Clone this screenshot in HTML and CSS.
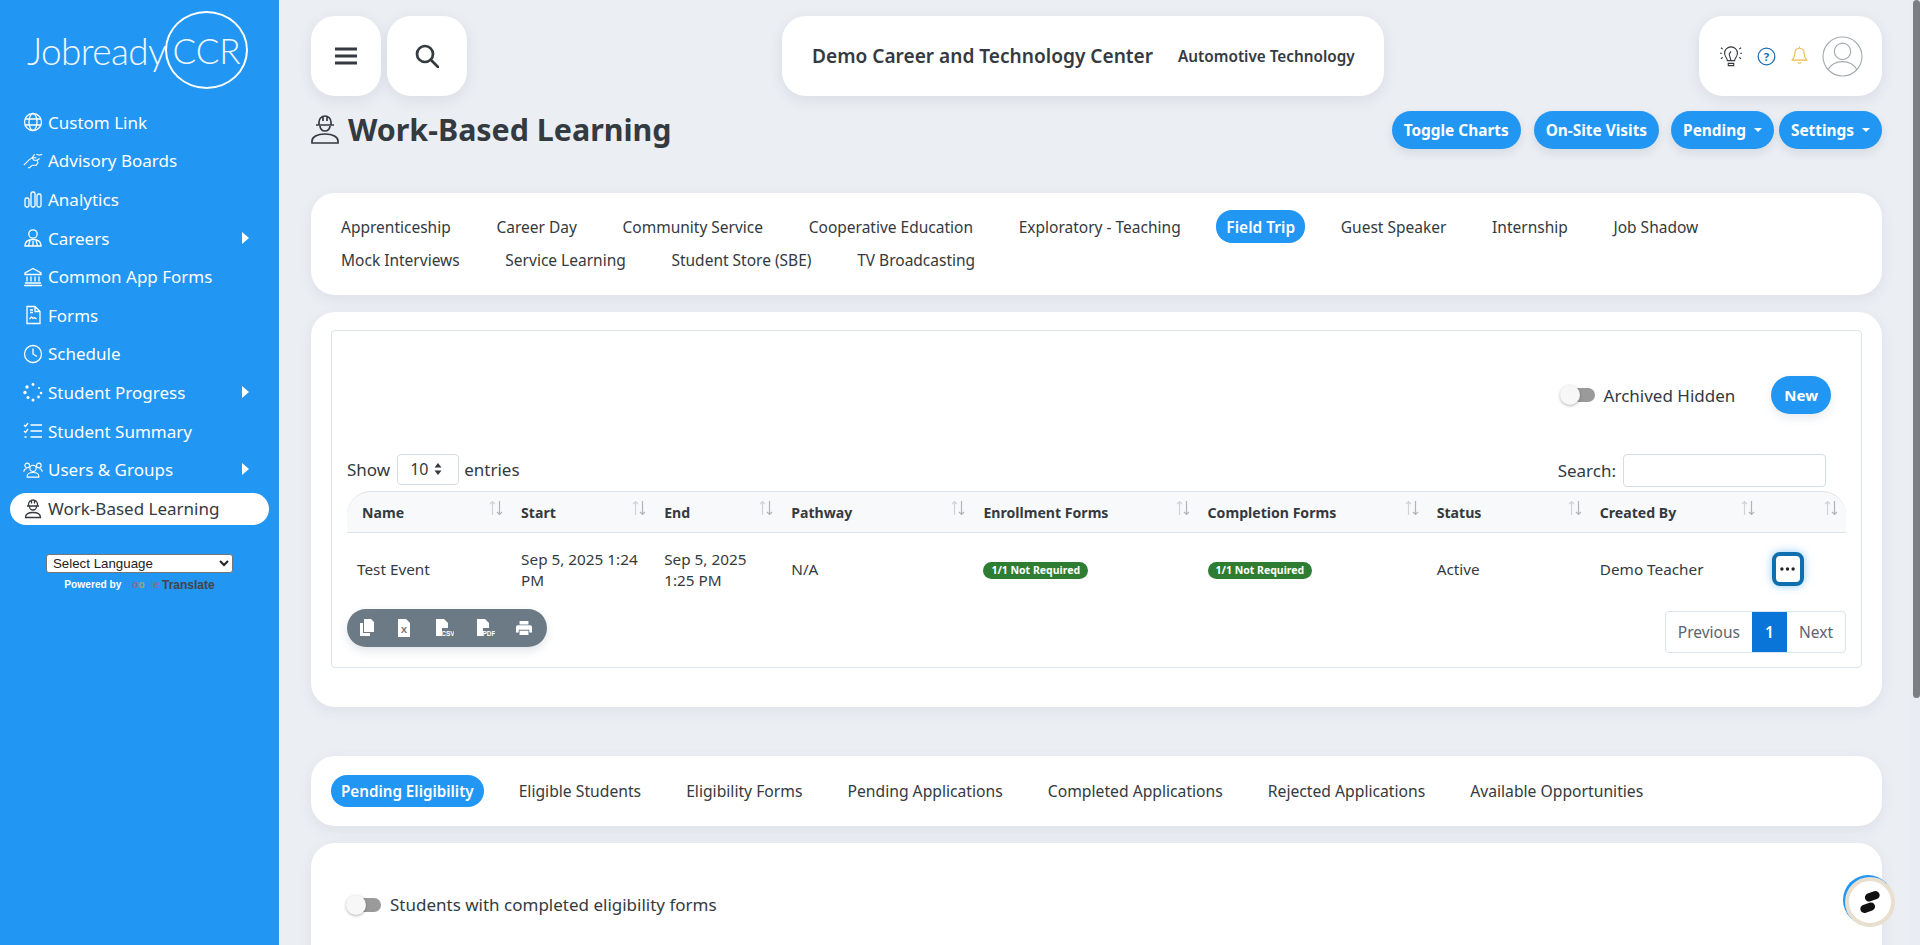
FILE: index.html
```html
<!DOCTYPE html>
<html lang="en">
<head>
<meta charset="utf-8">
<title>Work-Based Learning</title>
<link rel="stylesheet" href="styles.css">
</head>
<body>
<svg class="defs" width="0" height="0"><symbol id="sort" viewBox="0 0 14 16"><path class="s-up" d="M3.500 15V1.500M1 4l2.500-2.500L6 4"/><path class="s-down" d="M10.500 1v13.500M8 12l2.500 2.500L13 12"/></symbol></svg>
<div class="app">
<aside class="sidebar">
  <div class="logo"><span class="logo-word">Jobready</span><span class="logo-circle">CCR</span></div>
  <nav class="nav">
    <a class="nav-item"><svg class="ni" viewBox="0 0 20 20"><circle cx="10" cy="10" r="8.5"/><ellipse cx="10" cy="10" rx="4" ry="8.5"/><path d="M2 7h16M2 13h16"/></svg><span class="nl">Custom Link</span></a>
    <a class="nav-item"><svg class="ni" viewBox="0 0 24 20"><path d="M1 15l6-6 4-3h5M14 2l-3 4 2 3h4l1 3-2 3h-5l-3 3H6M17 9l3-2M16 2l4 1 3-1"/></svg><span class="nl">Advisory Boards</span></a>
    <a class="nav-item"><svg class="ni" viewBox="0 0 20 20"><rect x="2" y="9" width="4" height="9" rx="1.5"/><rect x="8" y="3" width="4" height="15" rx="1.5"/><rect x="14" y="5" width="4" height="13" rx="1.5"/></svg><span class="nl">Analytics</span></a>
    <a class="nav-item"><svg class="ni" viewBox="0 0 20 20"><circle cx="10" cy="6" r="4.2"/><path d="M2 18c0-4 3-6.500 8-6.500s8 2.500 8 6.500zM7 12l-1.500 6M13 12l1.500 6M10 13v5"/></svg><span class="nl">Careers</span><i class="caret"></i></a>
    <a class="nav-item"><svg class="ni" viewBox="0 0 20 20"><path d="M10 1.500L2 6v1.500h16V6zM4 9.500v5M8 9.500v5M12 9.500v5M16 9.500v5M2 16h16M1 18.500h18"/></svg><span class="nl">Common App Forms</span></a>
    <a class="nav-item"><svg class="ni" viewBox="0 0 20 20"><path d="M4 1.500h8l5 5v12H4zM7 5h3M7 7.500h3M12 2v4.500h5M6.500 14l2-2 1.500 1.500 1.500-1 2 1.500"/></svg><span class="nl">Forms</span></a>
    <a class="nav-item"><svg class="ni" viewBox="0 0 20 20"><circle cx="10" cy="10" r="8.500"/><path d="M10 4.500V10l4 2.500"/></svg><span class="nl">Schedule</span></a>
    <a class="nav-item"><svg class="ni dots" viewBox="0 0 20 20"><circle cx="10" cy="2.500" r="1.400"/><circle cx="4" cy="5" r="1.700"/><circle cx="16" cy="6" r="1"/><circle cx="2" cy="10.500" r="1.700"/><circle cx="18" cy="11" r="1.300"/><circle cx="5" cy="15.500" r="1.500"/><circle cx="15.500" cy="15" r="1.400"/><circle cx="10" cy="18" r="1.500"/></svg><span class="nl">Student Progress</span><i class="caret"></i></a>
    <a class="nav-item"><svg class="ni" viewBox="0 0 20 20"><path d="M1 4l1.500 1.500L5 2M7.500 4H19M1 10l1.500 1.500L5 8M7.500 10H19M1.500 16h2M7.500 16H19"/></svg><span class="nl">Student Summary</span></a>
    <a class="nav-item"><svg class="ni" viewBox="0 0 24 20"><circle cx="12" cy="8" r="3.800"/><circle cx="5" cy="4.500" r="2.800"/><circle cx="19" cy="4.500" r="2.800"/><path d="M5 18.500v-1c0-3 3-4.500 7-4.500s7 1.500 7 4.500v1zM1 12c0-2 1-3.500 3.500-3.500M23 12c0-2-1-3.500-3.500-3.500"/></svg><span class="nl">Users &amp; Groups</span><i class="caret"></i></a>
    <a class="nav-item active"><svg class="ni" viewBox="0 0 20 20"><path d="M5.500 7V5.500a4.500 4.500 0 0 1 9 0V7M4 7h12M6.500 7.500a3.500 3.500 0 0 0 7 0M8.500 1.500v3M11.500 1.500v3M2.500 18.500c0-3.500 3-5 7.500-5s7.500 1.500 7.500 5z"/></svg><span class="nl">Work-Based Learning</span></a>
  </nav>
  <div class="translate">
    <select class="lang-select"><option>Select Language</option></select>
    <div class="powered"><span class="pw">Powered by</span><span class="gg"><b class="g1">G</b><b class="g2">o</b><b class="g3">o</b><b class="g1">g</b><b class="g4">l</b><b class="g2">e</b></span><span class="tr">Translate</span></div>
  </div>
</aside>
<main class="main">
  <header class="topbar">
    <div class="top-left">
      <button class="sq-btn sq-menu"><svg class="ic22" viewBox="0 0 22 18"><path d="M0 2h22M0 9h22M0 16h22" stroke-width="2.800"/></svg></button>
      <button class="sq-btn sq-search"><svg class="ic26" viewBox="0 0 24 24"><circle cx="10" cy="10" r="8"/><path d="M16 16l7 7" stroke-linecap="round"/></svg></button>
    </div>
    <div class="top-center"><span class="school">Demo Career and Technology Center</span><span class="program">Automotive Technology</span></div>
    <div class="top-right">
      <svg class="tool-bulb" viewBox="0 0 24 24"><path d="M8 17c0-3-3-4-3-8a7 7 0 0 1 14 0c0 4-3 5-3 8zM9 20h6v2.500H9zM12 17l-2-7 2-3"/><path class="ylw" d="M1 3l2 1.500M23 3l-2 1.500M0 9h2M22 9h2M1 15l2-1.500M23 15l-2-1.500"/></svg>
      <svg class="tool-help" viewBox="0 0 20 20"><circle cx="10" cy="10" r="8.800"/><text x="10" y="14.300" text-anchor="middle" class="qm">?</text></svg>
      <svg class="tool-bell" viewBox="0 0 20 22"><path d="M10 1v2M10 3c-4 0-5.500 3-5.500 6.500S3 15 1.500 17h17c-1.500-2-3-4-3-7.500S14 3 10 3zM8 19.500c1 1.500 3 1.500 4 0"/></svg>
      <svg class="tool-user" viewBox="0 0 40 40"><circle cx="20" cy="20" r="19"/><circle cx="20" cy="15" r="8"/><path d="M6 33c3-6 8-8 14-8s11 2 14 8"/></svg>
    </div>
  </header>
  <section class="title-row">
    <h1 class="page-title"><svg class="title-ic" viewBox="0 0 28 30"><path d="M8 11V8a6 6 0 0 1 12 0v3M5 11h18M9 12a5 5 0 0 0 10 0M12 2v5M16 2v5M1 29v-2c0-4 5-7 13-7s13 3 13 7v2z"/></svg>Work-Based Learning</h1>
    <div class="title-actions">
      <button class="pill">Toggle Charts</button>
      <button class="pill">On-Site Visits</button>
      <button class="pill">Pending<i class="dd"></i></button>
      <button class="pill">Settings<i class="dd"></i></button>
    </div>
  </section>
  <section class="card tabs-card">
    <div class="tabs">
      <a class="tab">Apprenticeship</a><a class="tab">Career Day</a><a class="tab">Community Service</a><a class="tab">Cooperative Education</a><a class="tab">Exploratory - Teaching</a><a class="tab on">Field Trip</a><a class="tab">Guest Speaker</a><a class="tab">Internship</a><a class="tab">Job Shadow</a><a class="tab">Mock Interviews</a><a class="tab">Service Learning</a><a class="tab">Student Store (SBE)</a><a class="tab">TV Broadcasting</a>
    </div>
  </section>
  <section class="card table-card">
    <div class="inner">
      <div class="archived-row">
        <span class="switch"><i class="knob"></i></span><span class="arch-label">Archived Hidden</span>
        <button class="pill new">New</button>
      </div>
      <div class="dt-controls">
        <label class="show">Show <span class="sel">10<svg class="updown" viewBox="0 0 8 12"><path d="M4 0l3.500 4.500h-7zM4 12L.5 7.500h7z"/></svg></span> entries</label>
        <label class="search">Search: <span class="search-input"></span></label>
      </div>
      <table class="dt">
        <colgroup><col class="c1"><col class="c2"><col class="c3"><col class="c4"><col class="c5"><col class="c6"><col class="c7"><col class="c8"><col class="c9"></colgroup>
        <thead><tr>
          <th class="first">Name<svg class="sort"><use href="#sort"/></svg></th><th>Start<svg class="sort"><use href="#sort"/></svg></th><th>End<svg class="sort"><use href="#sort"/></svg></th><th>Pathway<svg class="sort"><use href="#sort"/></svg></th><th>Enrollment Forms<svg class="sort"><use href="#sort"/></svg></th><th>Completion Forms<svg class="sort"><use href="#sort"/></svg></th><th>Status<svg class="sort"><use href="#sort"/></svg></th><th>Created By<svg class="sort"><use href="#sort"/></svg></th><th><svg class="sort"><use href="#sort"/></svg></th>
        </tr></thead>
        <tbody><tr>
          <td>Test Event</td><td>Sep 5, 2025 1:24 PM</td><td>Sep 5, 2025 1:25 PM</td><td>N/A</td><td><span class="badge">1/1 Not Required</span></td><td><span class="badge">1/1 Not Required</span></td><td>Active</td><td>Demo Teacher</td><td><button class="more"><svg class="more-ic" viewBox="0 0 16 4"><circle cx="2" cy="2" r="1.800"/><circle cx="8" cy="2" r="1.800"/><circle cx="14" cy="2" r="1.800"/></svg></button></td>
        </tr></tbody>
      </table>
      <div class="dt-footer">
        <div class="exports">
          <svg class="ex" viewBox="0 0 16 18"><path d="M5 0h7l3 3v10H5zM1 4h3v10h7v3H1z"/></svg>
          <svg class="ex" viewBox="0 0 16 18"><path d="M2 0h8l4 4v14H2z"/><text x="8" y="14" text-anchor="middle" class="ext">X</text></svg>
          <svg class="ex wide" viewBox="0 0 20 18"><path d="M2 0h8l4 4v5H8v8H2z"/><text x="14" y="16.500" text-anchor="middle" class="exl">CSV</text></svg>
          <svg class="ex wide" viewBox="0 0 20 18"><path d="M2 0h8l4 4v5H8v8H2z"/><text x="14" y="16.500" text-anchor="middle" class="exl">PDF</text></svg>
          <svg class="ex" viewBox="0 0 18 18"><path d="M4 1h10v4H4zM2 6h14a2 2 0 0 1 2 2v6h-3v-3H3v3H0V8a2 2 0 0 1 2-2zM4 12h10v5H4z"/></svg>
        </div>
        <div class="pager"><a class="pg">Previous</a><a class="pg cur">1</a><a class="pg">Next</a></div>
      </div>
    </div>
  </section>
  <section class="card tabs2-card">
    <a class="tab on">Pending Eligibility</a><a class="tab">Eligible Students</a><a class="tab">Eligibility Forms</a><a class="tab">Pending Applications</a><a class="tab">Completed Applications</a><a class="tab">Rejected Applications</a><a class="tab">Available Opportunities</a>
  </section>
  <section class="card last-card">
    <div class="elig"><span class="switch"><i class="knob"></i></span><span class="arch-label">Students with completed eligibility forms</span></div>
  </section>
</main>
<div class="scrollbar"><div class="thumb"></div></div>
</div>
<button class="fab"><svg class="fab-ic" viewBox="0 0 24 24"><path d="M11 7L18 4.500M6 19.500L13 17"/></svg></button>
</body>
</html>
```
FILE: styles.css
```css
*{box-sizing:border-box}
html,body{margin:0;height:945px;overflow:hidden}
body{font-family:"Noto Sans","Open Sans",sans-serif;color:#343a40;background:#ebeef3;font-size:15px}
.defs{position:absolute}
.app{display:flex;height:945px;overflow:hidden}
.sidebar{width:279px;flex:none;background:#2196f3;color:#fff;display:flex;flex-direction:column;height:945px}
.logo{height:100px;display:flex;align-items:flex-start;padding-left:27px;padding-top:11px}
.logo-word{font-family:"Lato",sans-serif;font-weight:300;font-size:37px;letter-spacing:-.6px;margin-top:17px;color:#f0f8ff}
.logo-circle{width:83px;height:78px;border:2px solid #fff;border-radius:50%;display:flex;align-items:center;justify-content:center;font-family:"Lato",sans-serif;font-weight:300;font-size:35px;margin-left:-1px;flex:none;color:#f0f8ff}
.nav{display:flex;flex-direction:column;padding:3px 10px 0;gap:0}
.nav-item{height:38.600px;display:flex;align-items:center;padding-left:13px;position:relative;font-size:17px;color:#fff}
.ni{width:20px;height:20px;flex:none;fill:none;stroke:#fff;stroke-width:1.300;margin-right:5px}
.dots{fill:#fff;stroke:none}
.nl{white-space:nowrap}
.caret{position:absolute;left:232px;top:13px;border-left:7px solid #fff;border-top:6px solid transparent;border-bottom:6px solid transparent}
.nav-item.active{background:#fff;color:#343a40;height:32px;border-radius:16px;margin-top:4px}
.nav-item.active .ni{stroke:#343a40}
.translate{margin-top:29px;display:flex;flex-direction:column;align-items:center}
.lang-select{width:187px;height:19px;font-family:"Liberation Sans",sans-serif;font-size:13.300px;background:#fff;color:#222;border:1px solid #767676;border-radius:3px;padding:0 2px}
.powered{display:flex;align-items:center;font-family:"Liberation Sans",sans-serif;font-size:10.200px;font-weight:700;height:22px;margin-top:1px}
.pw{color:#fff;margin-right:3px}
.gg{font-size:10px;margin:0 3px 0 0;opacity:.55}
.g1{color:#4285f4}.g2{color:#ea4335}.g3{color:#fbbc05}.g4{color:#34a853}
.tr{color:#444;font-size:12px;font-weight:700}
.main{flex:1;min-width:0;padding:16px 28px 0 32px;overflow:hidden;height:945px}
.topbar{display:flex;justify-content:space-between;align-items:flex-start;height:80px}
.top-left{display:flex;gap:6px}
.sq-btn{height:80px;border:0;background:#fff;border-radius:24px;display:flex;align-items:center;justify-content:center;box-shadow:0 4px 14px rgba(60,80,110,.1);padding:0}
.sq-menu{width:70px}
.sq-search{width:80px}
.ic22{width:22px;height:18px;fill:none;stroke:#343a40}
.ic26{width:24px;height:24px;fill:none;stroke:#343a40;stroke-width:2.700}
.top-center{width:602px;height:80px;background:#fff;border-radius:24px;box-shadow:0 4px 14px rgba(60,80,110,.1);display:flex;align-items:center;padding-left:30px}
.school{font-size:19.100px;font-weight:600;margin-right:25px;white-space:nowrap}
.program{font-size:15.300px;font-weight:600;white-space:nowrap}
.top-right{width:183px;height:80px;background:#fff;border-radius:24px;box-shadow:0 4px 14px rgba(60,80,110,.1);display:flex;align-items:center;padding-left:20px}
.tool-bulb{width:24px;height:22px;fill:none;stroke:#343a40;stroke-width:1.200;margin-right:13.500px}
.ylw{stroke:#343a40}
.tool-help{width:19px;height:19px;fill:none;stroke:#1a6fb5;stroke-width:1.300;margin-right:15px}
.qm{font-size:12px;fill:#1a6fb5;stroke:none;font-weight:700}
.tool-bell{width:17px;height:20px;fill:none;stroke:#e9b949;stroke-width:1.300;margin-right:14px;margin-top:-2px}
.tool-user{width:41px;height:41px;fill:none;stroke:#a4abb2;stroke-width:1.100}
.title-row{display:flex;justify-content:space-between;align-items:flex-start;height:84px}
.page-title{margin:0;font-size:30.400px;font-weight:700;color:#343a40;display:flex;align-items:center;line-height:34px;padding-top:17px;white-space:nowrap}
.title-ic{width:28px;height:30px;margin-top:-2px;fill:none;stroke:#343a40;stroke-width:1.700;margin-right:9px}
.title-actions{display:flex;gap:5px;padding-top:15px}
.pill{height:38px;border:0;border-radius:19px;background:#2196f3;color:#fff;font-family:inherit;font-size:15.400px;font-weight:700;padding:0 12px;box-shadow:0 4px 10px rgba(60,80,110,.12);display:flex;align-items:center;white-space:nowrap}
.pill:nth-child(1){margin-right:8px}
.pill:nth-child(2){margin-right:7px}
.dd{display:inline-block;border-top:4px solid #fff;border-left:4px solid transparent;border-right:4px solid transparent;margin-left:8px}
.card{background:#fff;border-radius:24px;box-shadow:0 4px 14px rgba(60,80,110,.08)}
.tabs-card{height:102px;margin-top:13px;padding:17px 20px}
.tabs{display:flex;flex-wrap:wrap;gap:0 25.700px}
.tab{height:33px;display:inline-flex;align-items:center;padding:0 10px;font-size:15.500px;color:#343a40;white-space:nowrap;border-radius:16px}
.tab.on{background:#2196f3;color:#fff;font-weight:600}
.table-card{height:395px;margin-top:17px;padding:18px 20px}
.inner{height:338px;border:1px solid #dde3ea;border-radius:4px;padding:0 15px;position:relative}
.archived-row{display:flex;align-items:center;height:38px;margin-top:45px;justify-content:flex-end;padding-right:15px}
.switch{width:34px;height:14px;background:#9a9a9a;border-radius:7px;display:inline-block;position:relative;flex:none}
.knob{position:absolute;left:-1px;top:-3px;width:20px;height:20px;border-radius:50%;background:#f7f7f7;box-shadow:0 1px 3px rgba(0,0,0,.3)}
.arch-label{font-size:17px;margin-left:9px;white-space:nowrap}
.new{margin-left:36px;padding:0 13px;font-size:15px}
.dt-controls{display:flex;justify-content:space-between;align-items:center;height:36px;margin-top:37px;font-size:17px}
.show{display:flex;align-items:center;gap:4px}
.sel{width:62px;height:31px;border:1px solid #d5dce4;border-radius:4px;display:flex;align-items:center;padding-left:12px;gap:6px;margin:0 1px 0 3px;font-size:16px}
.updown{width:8px;height:12px;fill:#343a40}
.search{display:flex;align-items:center;gap:7px;margin-right:20px;margin-top:3px}
.search-input{width:203px;height:33px;border:1px solid #d5dce4;border-radius:4px;display:block}
.dt{width:100%;border-collapse:separate;border-spacing:0;table-layout:fixed;font-size:15.300px;margin-top:4px}
.c1{width:164px}.c2{width:143px}.c3{width:127px}.c4{width:192px}.c5{width:224px}.c6{width:229px}.c7{width:163px}.c8{width:173px}.c9{width:83px}
.dt th{height:42px;background:#f8f9fa;border-top:1px solid #dde3ea;border-bottom:1px solid #dde3ea;text-align:left;padding:0 10px;font-weight:700;font-size:14.100px;position:relative;white-space:nowrap}
.dt th.first{padding-left:15px;border-top-left-radius:24px}
.dt th:last-child{border-top-right-radius:24px}
.sort{position:absolute;right:8px;top:8px;width:14px;height:16px}
.s-up{fill:none;stroke:#d0d4d8;stroke-width:1.200}
.s-down{fill:none;stroke:#b0b5ba;stroke-width:1.200}
.dt td{height:75px;padding:0 10px 2px;line-height:21px;vertical-align:middle;border:0}
.badge{display:inline-block;background:#2e7d32;color:#fff;font-size:10.500px;font-weight:700;border-radius:9px;padding:0 8px;line-height:17px;white-space:nowrap;height:17px;vertical-align:middle}
.more{width:32px;height:34px;border:4px solid #0f6fae;border-radius:8px;background:#fff;padding:0;display:flex;align-items:center;justify-content:center;box-shadow:0 0 9px rgba(33,150,243,.5);margin:-2px 0 0 -1px}
.more-ic{width:15px;height:4px;fill:#222}
.dt-footer{display:flex;justify-content:space-between;align-items:flex-start;margin-top:1px}
.exports{width:200px;height:38px;background:#6c7a86;border-radius:19px;display:flex;align-items:center;justify-content:space-between;padding:0 15px 0 12px;box-shadow:0 4px 10px rgba(60,80,110,.15)}
.ex{width:16px;height:18px;fill:#fff}
.ex.wide{width:20px}
.ext{font-size:9px;font-weight:700;fill:#6c7a86}
.exl{font-size:6.500px;font-weight:700;fill:#fff;font-family:"Liberation Sans",sans-serif}
.pager{display:flex;height:42px;border:1px solid #dde3ea;border-radius:4px;font-size:15.500px;color:#5a6570;align-items:stretch;margin-top:2px}
.pg{display:flex;align-items:center;padding:0 12px}
.pg.cur{background:#0a75d8;color:#fff;font-weight:600;width:35px;justify-content:center;padding:0}
.tabs2-card{height:70px;margin-top:49px;padding:19px 20px;display:flex;gap:25px;align-items:flex-start}
.tabs2-card .tab{font-size:15.700px;height:32px}
.tabs2-card .tab.on{font-size:15.200px}
.last-card{height:300px;margin-top:17px;padding-top:50px}
.elig{display:flex;align-items:center;padding-left:36px}
.scrollbar{flex:none;width:10px;height:945px;background:#e9edf3}
.thumb{width:7px;height:698px;background:#7c7e82;border-radius:4px;margin-left:3px}
.fab{position:absolute;left:1845px;top:877px;width:50px;height:50px;border-radius:50%;background:#fff;border:4px solid #e9dfcf;padding:0;display:flex;align-items:center;justify-content:center;box-shadow:-2px -2px 0 #2196f3}
.fab-ic{width:22px;height:22px;fill:none;stroke:#111;stroke-width:9;stroke-linecap:round}
```
